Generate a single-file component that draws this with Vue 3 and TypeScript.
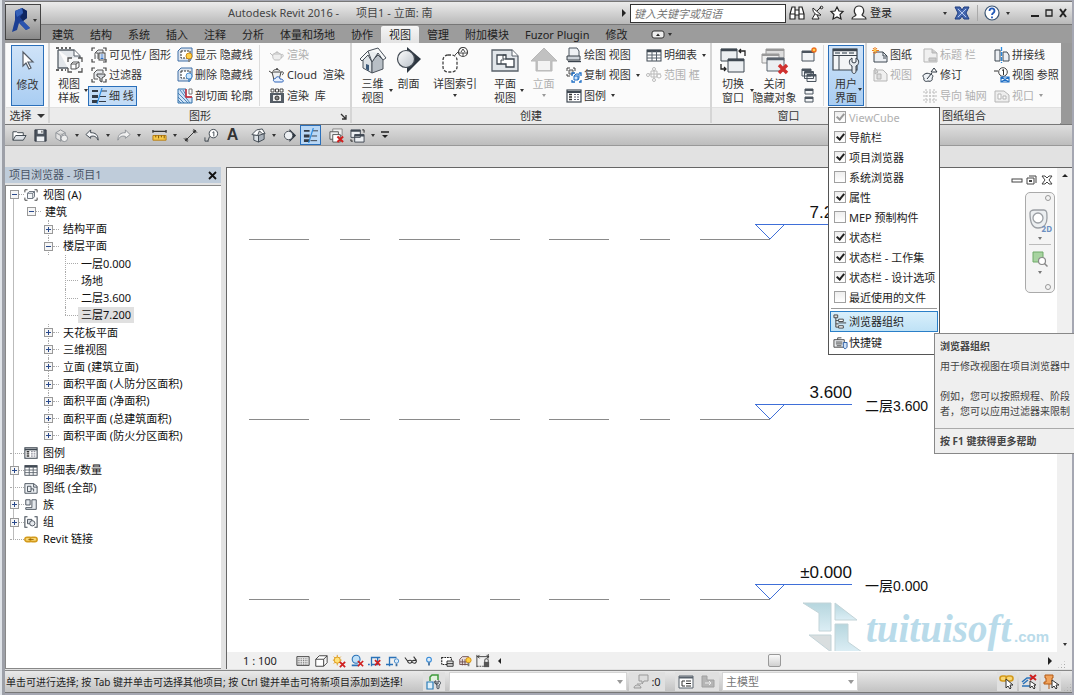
<script setup lang="ts">
import { ref } from 'vue'

interface Cmd { icon: string; label: string; off?: boolean; on?: boolean; drop?: boolean }
interface Tool { kind: 'btn' | 'drop' | 'sep'; icon?: string; label?: string; on?: boolean }
interface Node { depth: number; label: string; box?: '+' | '-'; icon?: string; selected?: boolean; end?: boolean }
interface Option { label: string; checked: boolean; off?: boolean }

const tabs = ['建筑', '结构', '系统', '插入', '注释', '分析', '体量和场地', '协作', '视图', '管理', '附加模块', 'Fuzor Plugin', '修改']
const activeTab = ref('视图')

const graphicsA: Cmd[] = [
  { icon: 'visibility', label: '可见性/ 图形' },
  { icon: 'filter', label: '过滤器' },
  { icon: 'thin', label: '细 线', on: true },
]
const graphicsB: Cmd[] = [
  { icon: 'showhidden', label: '显示 隐藏线' },
  { icon: 'removehidden', label: '删除 隐藏线' },
  { icon: 'cutprofile', label: '剖切面 轮廓' },
]
const graphicsC: Cmd[] = [
  { icon: 'teapot', label: '渲染', off: true },
  { icon: 'cloud', label: 'Cloud  渲染' },
  { icon: 'gallery', label: '渲染  库' },
]
const createA: Cmd[] = [
  { icon: 'drafting', label: '绘图 视图' },
  { icon: 'duplicate', label: '复制 视图', drop: true },
  { icon: 'legend', label: '图例', drop: true },
]
const createB: Cmd[] = [
  { icon: 'schedule', label: '明细表', drop: true },
  { icon: 'scope', label: '范围 框', off: true },
]
const windowsCol = [
  { icon: 'newwin', label: '复制窗口' },
  { icon: 'cascade', label: '层叠窗口' },
  { icon: 'tile', label: '平铺窗口' },
]
const sheetA: Cmd[] = [
  { icon: 'sheetnew', label: '图纸' },
  { icon: 'sheetview', label: '视图', off: true },
]
const sheetB: Cmd[] = [
  { icon: 'titleblock', label: '标题 栏', off: true },
  { icon: 'revision', label: '修订' },
  { icon: 'guidegrid', label: '导向 轴网', off: true },
]
const sheetC: Cmd[] = [
  { icon: 'matchline', label: '拼接线' },
  { icon: 'viewref', label: '视图 参照' },
  { icon: 'viewport', label: '视口', off: true, drop: true },
]

const tools: Tool[] = [
  { kind: 'btn', icon: 'open', label: '打开' },
  { kind: 'btn', icon: 'save', label: '保存' },
  { kind: 'btn', icon: 'sync', label: '同步' },
  { kind: 'drop' },
  { kind: 'btn', icon: 'undo', label: '放弃' },
  { kind: 'drop' },
  { kind: 'btn', icon: 'redo', label: '重做' },
  { kind: 'drop' },
  { kind: 'sep' },
  { kind: 'btn', icon: 'measure', label: '测量' },
  { kind: 'drop' },
  { kind: 'btn', icon: 'dimension', label: '对齐尺寸标注' },
  { kind: 'btn', icon: 'tag', label: '标记' },
  { kind: 'btn', icon: 'text', label: '文字' },
  { kind: 'sep' },
  { kind: 'btn', icon: 'house', label: '默认三维视图' },
  { kind: 'drop' },
  { kind: 'btn', icon: 'sectionmark', label: '剖面' },
  { kind: 'btn', icon: 'thin', label: '细线', on: true },
  { kind: 'sep' },
  { kind: 'btn', icon: 'closehidden', label: '关闭隐藏窗口' },
  { kind: 'btn', icon: 'switchsmall', label: '切换窗口' },
  { kind: 'drop' },
]

const nodes: Node[] = [
  { depth: 0, label: '视图 (A)', box: '-', icon: 'tviews' },
  { depth: 1, label: '建筑', box: '-' },
  { depth: 2, label: '结构平面', box: '+' },
  { depth: 2, label: '楼层平面', box: '-' },
  { depth: 3, label: '一层0.000' },
  { depth: 3, label: '场地' },
  { depth: 3, label: '二层3.600' },
  { depth: 3, label: '三层7.200', selected: true, end: true },
  { depth: 2, label: '天花板平面', box: '+' },
  { depth: 2, label: '三维视图', box: '+' },
  { depth: 2, label: '立面 (建筑立面)', box: '+' },
  { depth: 2, label: '面积平面 (人防分区面积)', box: '+' },
  { depth: 2, label: '面积平面 (净面积)', box: '+' },
  { depth: 2, label: '面积平面 (总建筑面积)', box: '+' },
  { depth: 2, label: '面积平面 (防火分区面积)', box: '+', end: true },
  { depth: 0, label: '图例', icon: 'legend' },
  { depth: 0, label: '明细表/数量', box: '+', icon: 'schedule' },
  { depth: 0, label: '图纸 (全部)', icon: 'tsheets' },
  { depth: 0, label: '族', box: '+', icon: 'tfamily' },
  { depth: 0, label: '组', box: '+', icon: 'tgroup' },
  { depth: 0, label: 'Revit 链接', icon: 'tlink' },
]

const options = ref<Option[]>([
  { label: 'ViewCube', checked: true, off: true },
  { label: '导航栏', checked: true },
  { label: '项目浏览器', checked: true },
  { label: '系统浏览器', checked: false },
  { label: '属性', checked: true },
  { label: 'MEP 预制构件', checked: false },
  { label: '状态栏', checked: true },
  { label: '状态栏 - 工作集', checked: true },
  { label: '状态栏 - 设计选项', checked: true },
  { label: '最近使用的文件', checked: false },
])

const viewTools = ['vdetail', 'vstyle', 'vsun', 'vshadow', 'vcrop', 'vcropshow', 'vglasses', 'vbulb', 'vtemp', 'vanalytic', 'vlock']

const dashes = [[249, 309], [340, 370], [399, 460], [490, 520], [549, 609], [640, 670], [700, 770]]
const levels = [
  { y: 225, value: '7.200', name: '' },
  { y: 405, value: '3.600', name: '二层3.600' },
  { y: 585, value: '±0.000', name: '一层0.000' },
]
</script>

<template>
  <svg width="0" height="0" class="defs" aria-hidden="true">
    <defs>
      <linearGradient id="steel" x1="0" y1="0" x2="1" y2="1"><stop offset="0" stop-color="#fff" /><stop offset="1" stop-color="#b9c0c8" /></linearGradient>
      <linearGradient id="wm" x1="0" y1="0" x2="0" y2="1"><stop offset="0" stop-color="#b6d6de" /><stop offset="1" stop-color="#dceef5" /></linearGradient>
    </defs>
    <symbol id="cursor" viewBox="0 0 16 24"><path d="M3 3v14l3-3 3 6 2-1-3-6h5z" fill="#fff" stroke="#555c66" stroke-width="1.2" /></symbol>
    <symbol id="template" viewBox="0 0 28 28">
      <path d="M3 3h16l6 6v10M3 3v18h10" fill="#e3e7eb" stroke="#555d66" stroke-width="1.3" /><path d="M19 3v6h6" fill="#fff" stroke="#555d66" />
      <path d="M1 1h3M6 1h2M10 1h2M14 1h2M1 23h3M6 23h2M10 23h1" stroke="#333" stroke-width="1.600" fill="none" />
      <rect x="13" y="11" width="14" height="14" fill="#f8f9fa" /><path d="M13 15v-4h4M23 11h4v4M27 21v4h-4M17 25h-4v-4" fill="none" stroke="#555" stroke-width="1.300" />
      <path d="M16 17h5v5h-5zM16 17l2-2h6l-3 2M21 22l3-2v-5" fill="#fff" stroke="#555" />
    </symbol>
    <symbol id="visibility" viewBox="0 0 16 16"><path d="M1 4V1h3M12 1h3v3M15 12v3h-3M4 15H1v-3" fill="none" stroke="#444" stroke-width="1.2" /><path d="M4 12V6l3-3h5v3" fill="#e6e9ed" stroke="#555" /><path d="M4 6h3v6" fill="#fff" stroke="#555" /><rect x="8" y="6" width="6" height="7" fill="#fff" stroke="#444" /><path d="M9.500 8h3M9.500 10h3M9.500 11.500h3" stroke="#2f6fc4" /></symbol>
    <symbol id="filter" viewBox="0 0 16 16"><path d="M1 4V1h3M12 1h3v3M15 12v3h-3M4 15H1v-3" fill="none" stroke="#444" stroke-width="1.200" /><path d="M3 12V6l3-3h6v3M3 12h4" fill="#e6e9ed" stroke="#555" /><path d="M6 7h8v2l-3 2v4l-2-1v-3L6 9z" fill="#d3d7dc" stroke="#444" /></symbol>
    <symbol id="thin" viewBox="0 0 16 16"><path d="M1 2h6v2H1zM1 7h6v3H1zM1 12h6v3H1z" fill="#333b46" /><path d="M10 3h6M9 8.500h6M8 13.500h7" stroke="#333b46" /><path d="M11 0L6 16" stroke="#2b8be0" stroke-width="1.200" /></symbol>
    <symbol id="showhidden" viewBox="0 0 16 16"><path d="M1 4l3-3h11v9l-2 4H1z" fill="#dce4ee" stroke="#3f6ea6" /><path d="M4 4h9v7H4z" fill="#fff" stroke="#333" stroke-dasharray="2 1" /><circle cx="12" cy="9" r="3" fill="#ffd24a" stroke="#d08a14" /><path d="M11 12h2v3h-2z" fill="#888" /></symbol>
    <symbol id="removehidden" viewBox="0 0 16 16"><path d="M1 4l3-3h11v9l-2 4H1z" fill="#dce4ee" stroke="#3f6ea6" /><path d="M4 4h9v7H4z" fill="#fff" stroke="#333" stroke-dasharray="2 1" /><circle cx="12" cy="9" r="3" fill="#cfe6fb" stroke="#4b8fd0" /><path d="M11 12h2v3h-2z" fill="#5a8ec0" /></symbol>
    <symbol id="cutprofile" viewBox="0 0 16 16"><path d="M1 1h8v8h6v6H1z" fill="#cfe3f7" stroke="#2f6ea9" /><path d="M1 5l10 10M1 9l6 6M1 12l3 3M3 2l10 13M6 2l3 5" stroke="#2f6ea9" stroke-width=".8" /><path d="M9 1v8h6" fill="none" stroke="#d7262b" stroke-width="1.400" /><path d="M12 1v5h3V1z" fill="#fff" stroke="#777" /></symbol>
    <symbol id="teapot" viewBox="0 0 16 16"><path d="M4 7h8c1 4-1 6-2 6H6c-1 0-3-2-2-6zM5 7c1-2 5-2 6 0M8 5V4M4 9L1 6M12 8c3-2 3 2 0 3" fill="#eee" stroke="#bcbcbc" /></symbol>
    <symbol id="cloud" viewBox="0 0 16 16"><path d="M4 4c1-2 6-2 7 0M3 5h9l-2 8H5zM3 6L0 4M12 5c3-1 3 2 1 3" fill="#eef0f2" stroke="#444" /><circle cx="8" cy="2" r="1" fill="#444" /><path d="M6 15c-3-1-1-4 0-3 1-3 5-3 5 0 4 0 4 3 2 3z" fill="#e8f1ff" stroke="#2d62b8" /></symbol>
    <symbol id="gallery" viewBox="0 0 16 16"><path d="M1 5h14v10H1z" fill="#555d66" /><path d="M2 1h3v3H2zM6.500 1h3v3h-3zM11 1h3v3h-3z" fill="#fff" stroke="#444" /><path d="M4 7h8v6H4z" fill="#eee" /><circle cx="8" cy="10" r="2" fill="#888" stroke="#333" /></symbol>
    <symbol id="bighouse" viewBox="0 0 28 28"><path d="M4 12v9l9 5V13L9 7z" fill="#dde2e6" stroke="#4a525b" /><path d="M13 14v12l11-4v-9l-5-5z" fill="#b8bfc6" stroke="#4a525b" /><path d="M1 12l8-8 10-3 8 10-3 2-5-7-6 9-4-7-6 6z" fill="#f6f8f9" stroke="#4a525b" /><path d="M9 4l4 11 6-9" fill="#e9edf0" stroke="#4a525b" /><path d="M7 17l3 1v6l-3-2z" fill="#3c5a7a" /></symbol>
    <symbol id="bigsection" viewBox="0 0 28 28"><path d="M12 0l14 12-14 14z" fill="#2d3640" /><circle cx="11" cy="12" r="8.500" fill="url(#steel)" stroke="#444c55" stroke-width="1.200" /></symbol>
    <symbol id="callout" viewBox="0 0 28 28"><rect x="2" y="8" width="14" height="17" rx="5" fill="#fff" stroke="#444" stroke-width="1.300" stroke-dasharray="3 1.500" /><path d="M14 8l3-3" stroke="#444" /><circle cx="22" cy="5" r="4.500" fill="#fff" stroke="#444" stroke-width="1.200" /><path d="M17 6h10M20 5l2-3 2 3M22 6v3" stroke="#444" fill="none" /></symbol>
    <symbol id="bigplan" viewBox="0 0 28 28"><path d="M1 3h20l6 6v15H1z" fill="#e2e6ea" stroke="#59616a" stroke-width="1.300" /><path d="M21 3v6h6" fill="#fff" stroke="#59616a" /><path d="M6 8h9v4h8v8h-8v-3H6z" fill="#fff" stroke="#3c444d" stroke-width="1.300" /><path d="M15 8h-3v4h3M10 17v-4h3" fill="none" stroke="#3c444d" /></symbol>
    <symbol id="elevation" viewBox="0 0 28 28"><path d="M14 1L1 14h5v10h16V14h5z" fill="#c1c1c1" stroke="#b8b8b8" /><path d="M8 14h12v9H8z" fill="#f3f3f3" /></symbol>
    <symbol id="drafting" viewBox="0 0 16 16"><path d="M3 1h8l2 3v6H3z" fill="#eef1f4" stroke="#4b545e" /><path d="M1 9h13v4H1z" fill="#cdd3d9" stroke="#3a424b" /><path d="M2 14.500h13" stroke="#3a424b" stroke-width="1.400" /></symbol>
    <symbol id="duplicate" viewBox="0 0 16 16"><path d="M1 4V1h3M7 1h2v3M1 7v2h3" fill="none" stroke="#444" /><path d="M3 3h4v4H3z" fill="#ddd" stroke="#555" /><path d="M6 9V6h3M13 6h2v3M15 13v2h-2M9 15H6v-2" fill="none" stroke="#1f6fc5" stroke-width="1.300" /><path d="M8 9h4v4H8zM8 9l2-2h3v4l-1 2" fill="#cfe4fa" stroke="#1f6fc5" /></symbol>
    <symbol id="legend" viewBox="0 0 16 16"><rect x="1" y="2" width="14" height="12" fill="#fff" stroke="#3f4852" stroke-width="1.200" /><path d="M1 4h14" stroke="#3f4852" stroke-width="2" /><path d="M3 6.500h3M3 9h3M3 11.500h3" stroke="#333" stroke-width="1.600" /><path d="M8 6.500h5M8 9h5M8 11.500h5" stroke="#667" stroke-dasharray="2 1" /></symbol>
    <symbol id="schedule" viewBox="0 0 16 16"><rect x="1" y="3" width="14" height="11" fill="#fff" stroke="#3f4852" /><path d="M1 4h14" stroke="#3f4852" stroke-width="2.500" /><path d="M1 8h14M1 11h14M6 4v10M10.500 4v10" stroke="#59626c" /></symbol>
    <symbol id="scope" viewBox="0 0 16 16"><path d="M2 7h13M8 2v12M5 4h6v6H5z" stroke="#bbb" fill="none" /><circle cx="2" cy="8" r="1.500" fill="#fff" stroke="#bbb" /><circle cx="8" cy="2" r="1.500" fill="#fff" stroke="#bbb" /><circle cx="13" cy="9" r="2" fill="#fff" stroke="#bbb" /><circle cx="8" cy="13" r="1.500" fill="#fff" stroke="#bbb" /></symbol>
    <symbol id="switchwin" viewBox="0 0 28 28"><path d="M2 2h16v12H2z" fill="#eceff2" stroke="#3f4852" /><path d="M2 3h16" stroke="#3f4852" stroke-width="2.500" /><path d="M9 12h16v13H9z" fill="#eceff2" stroke="#3f4852" /><path d="M9 13h16" stroke="#3f4852" stroke-width="2.500" /><path d="M20 4h6v5M22 2l-2 2 2 2M2 17v5h5M5 20l2 2-2 2" fill="none" stroke="#222" stroke-width="1.300" /></symbol>
    <symbol id="bigclosehidden" viewBox="0 0 28 28"><path d="M5 2h18v12H5z" fill="#ddd" stroke="#999" /><path d="M5 3h18" stroke="#999" stroke-width="2" /><path d="M1 7h17v9H1z" fill="#eee" stroke="#999" /><path d="M1 8h17" stroke="#999" stroke-width="2" /><path d="M6 11h17v13H6z" fill="#eceff2" stroke="#59626c" /><path d="M6 12h17" stroke="#59626c" stroke-width="2.500" /><path d="M18 18l8 8M26 18l-8 8" stroke="#d0312f" stroke-width="3.400" /></symbol>
    <symbol id="newwin" viewBox="0 0 16 16"><path d="M1 4h12v10H1z" fill="#f2f4f6" stroke="#4b545e" /><path d="M1 5h12" stroke="#4b545e" stroke-width="2" /><circle cx="13" cy="3" r="2" fill="#ffd24a" stroke="#ed6c1d" stroke-width="1.400" /></symbol>
    <symbol id="cascade" viewBox="0 0 16 16"><g fill="#f2f4f6" stroke="#4b545e"><path d="M1 2h9v7H1zM3.500 4.500h9v7h-9zM6 7.500h9v7H6z" /></g><path d="M1 3h9M4 5.500h8M6 8.500h9" stroke="#4b545e" stroke-width="1.800" /></symbol>
    <symbol id="tile" viewBox="0 0 16 16"><path d="M4 1h8v5H4zM4 9h8v5H4z" fill="#f2f4f6" stroke="#4b545e" /><path d="M4 2h8M4 10h8" stroke="#4b545e" stroke-width="2" /></symbol>
    <symbol id="userui" viewBox="0 0 28 28"><path d="M1 2h24v21H1z" fill="#f3f5f7" stroke="#3b444e" stroke-width="1.200" /><path d="M1 3h24" stroke="#3b444e" stroke-width="2.500" /><path d="M1 8.500h24M7 8v15" stroke="#3b444e" /><path d="M3 6h5M10 6h5M17 6h5" stroke="#6a747f" stroke-width="1.500" /><path d="M20 11v4l2 1 2-1v-4c4 2 3 7 0 8v6c-1 2-3 2-4 0v-6c-3-1-4-6 0-8z" fill="#e3e7ec" stroke="#333d48" /></symbol>
    <symbol id="sheetnew" viewBox="0 0 16 16"><path d="M2 5h9l4 4v6H2z" fill="#eceff3" stroke="#3f4852" /><path d="M11 5v4h4M11 11h3" stroke="#3f4852" fill="none" /><path d="M3 0v7M0 3.500h7M1 1l4 5M5 1L1 6" stroke="#ed7a1d" /><circle cx="3" cy="3.500" r="1.300" fill="#ffd24a" /></symbol>
    <symbol id="sheetview" viewBox="0 0 16 16"><path d="M2 3h9l4 4v7H2z" fill="#f0f0f0" stroke="#b5b5b5" /><path d="M5 7h4v5H5zM3 1v6l3-2z" fill="#ddd" stroke="#b5b5b5" /></symbol>
    <symbol id="titleblock" viewBox="0 0 16 16"><path d="M2 2h8l5 4v9H2z" fill="#f0f0f0" stroke="#b5b5b5" /><path d="M7 11h7v3H7zM10 2v4h5" fill="#ccc" stroke="#b5b5b5" /></symbol>
    <symbol id="revision" viewBox="0 0 16 16"><path d="M3 7c-3 1-2 3-1 4-1 3 2 4 4 3 3 1 5-1 4-3 2-2 0-4-2-4-2-1-4-1-5 0z" fill="#eef2f6" stroke="#2d3640" /><path d="M5 12l5-6" stroke="#2d3640" /><path d="M9 5l3-4 3 4z" fill="#fff" stroke="#2d3640" /></symbol>
    <symbol id="guidegrid" viewBox="0 0 16 16"><path d="M4 1v14M8 1v14M12 1v14M1 4h14M1 8h14M1 12h14" stroke="#bbb" stroke-dasharray="2 1" /></symbol>
    <symbol id="matchline" viewBox="0 0 16 16"><path d="M1 3h5v11H1zM9 5h4l2 3v6H9z" fill="#eceff3" stroke="#3f4852" /><path d="M7.500 0v16" stroke="#2b8be0" stroke-width="1.300" stroke-dasharray="4 1" /></symbol>
    <symbol id="viewref" viewBox="0 0 16 16"><circle cx="9" cy="5" r="4.300" fill="#fff" stroke="#444" /><path d="M0 4h4M8 3.500L9.500 2.500V8" fill="none" stroke="#333" /><path d="M7 10h8v5H7zM7 10l8 5M15 10l-8 5" fill="none" stroke="#1f6fc5" stroke-width="1.200" /></symbol>
    <symbol id="viewport" viewBox="0 0 16 16"><path d="M1 3h9l5 4v7H1z" fill="#eee" stroke="#b5b5b5" /><path d="M4 6h3v5H4zM9 8h3v3H9z" fill="#fff" stroke="#b5b5b5" /></symbol>

    <symbol id="open" viewBox="0 0 16 16"><path d="M1 13V4h4l1 1h6v3" fill="#fff" stroke="#3c444d" /><path d="M1 13l3-5h11l-3 5z" fill="#dfe3e8" stroke="#3c444d" /></symbol>
    <symbol id="save" viewBox="0 0 16 16"><path d="M2 2h12v12H2z" fill="#4a525c" stroke="#333b45" /><path d="M5 2h6v4H5zM4 9h8v5H4z" fill="#eef1f4" /><path d="M9 3h1v2H9z" fill="#333" /></symbol>
    <symbol id="sync" viewBox="0 0 16 16"><path d="M2 5l5-3 5 3v6l-5 3-5-3zM2 5l5 3 5-3M7 8v6" fill="#e3e3e3" stroke="#8d9196" /><circle cx="11" cy="11" r="3.500" fill="#eee" stroke="#8d9196" /></symbol>
    <symbol id="undo" viewBox="0 0 16 16"><path d="M6 2L1 7l5 4V9c4-1 6 0 8 4 0-6-3-8-8-8z" fill="#f5f6f8" stroke="#3c444d" /></symbol>
    <symbol id="redo" viewBox="0 0 16 16"><path d="M10 2l5 5-5 4V9C6 8 4 9 2 13c0-6 3-8 8-8z" fill="#f0f0f0" stroke="#8d9196" /></symbol>
    <symbol id="measure" viewBox="0 0 16 16"><path d="M1 3.500h14M1 2v3M15 2v3" stroke="#333" stroke-width="1.400" /><path d="M1 8h14v5H1z" fill="#f7c84a" stroke="#b77d10" /><path d="M4 8v2M7 8v3M10 8v2M13 8v3" stroke="#7a5200" /></symbol>
    <symbol id="dimension" viewBox="0 0 16 16"><path d="M3 13L13 3M1 11l4 4M11 1l4 4" stroke="#333" fill="none" /><path d="M2 14l1-4 3 3zM14 2l-1 4-3-3z" fill="#333" /></symbol>
    <symbol id="tag" viewBox="0 0 16 16"><circle cx="10" cy="6" r="4.500" fill="#fff" stroke="#3c444d" /><path d="M9 5l1.500-1v5M6 9l-2 5M1 14h4M1 10v4" fill="none" stroke="#3c444d" /></symbol>
    <symbol id="house" viewBox="0 0 16 16"><path d="M3 7v6l5 2V8z" fill="#dde2e6" stroke="#3f4750" /><path d="M8 8v7l6-3V6z" fill="#a9b1ba" stroke="#3f4750" /><path d="M1 7l5-5 6-1 3 5-3 0-3-3-2 5z" fill="#fff" stroke="#3f4750" /></symbol>
    <symbol id="sectionmark" viewBox="0 0 16 16"><path d="M8 1l7 7-7 7z" fill="#2d3640" /><circle cx="7" cy="8" r="4.500" fill="#eceff2" stroke="#444c55" /></symbol>
    <symbol id="closehidden" viewBox="0 0 16 16"><path d="M4 1h10v7H4z" fill="#eee" stroke="#888" /><path d="M1 4h9v8H1z" fill="#eee" stroke="#555" /><path d="M4 7h8v8H4z" fill="#fff" stroke="#555" /><path d="M9 9l6 6M15 9l-6 6" stroke="#d0201f" stroke-width="2.200" /></symbol>
    <symbol id="switchsmall" viewBox="0 0 16 16"><path d="M1 2h10v8H1zM5 7h10v8H5z" fill="#eceff2" stroke="#3f4852" /><path d="M1 3h10M5 8h10" stroke="#3f4852" stroke-width="2" /><path d="M13 2h2v3M1 12v2h2" stroke="#222" fill="none" /></symbol>

    <symbol id="tviews" viewBox="0 0 16 16"><path d="M1 5V2h3M12 2h3v3M15 11v3h-3M4 14H1v-3" fill="none" stroke="#333" /><path d="M4 6h6v6H4zM4 6l2-2h6l-2 2M10 12l2-2V4" fill="#f4f6f8" stroke="#5b6570" /></symbol>
    <symbol id="tsheets" viewBox="0 0 16 16"><path d="M1 3h10l4 3v8H1z" fill="#eef1f4" stroke="#3f4852" /><path d="M11 3v4h4M4 6h4v6H4zM8 9h3v3" fill="none" stroke="#3f4852" /></symbol>
    <symbol id="tfamily" viewBox="0 0 16 16"><path d="M2 2h5v6H2zM9 2h5v11H2v-2h7z" fill="#e5e9ed" stroke="#3f4852" /></symbol>
    <symbol id="tgroup" viewBox="0 0 16 16"><path d="M4 2H1v12h3M12 2h3v12h-3" fill="none" stroke="#3f4852" stroke-width="1.200" /><path d="M4 5h5v5H4z" fill="#d8dde3" stroke="#3f4852" /><circle cx="9.500" cy="9.500" r="3" fill="#e8ebef" stroke="#3f4852" /></symbol>
    <symbol id="tlink" viewBox="0 0 16 16"><rect x="1" y="6" width="8" height="5" rx="2.500" fill="#f9d774" stroke="#d39a1c" stroke-width="1.800" /><rect x="7" y="6" width="8" height="5" rx="2.500" fill="#f9d774" stroke="#d39a1c" stroke-width="1.800" /><path d="M5 8.500h6" stroke="#8d5f05" /></symbol>

    <symbol id="vdetail" viewBox="0 0 16 16"><path d="M1 3h14v10H1z" fill="#eee" stroke="#333" /><path d="M2 5.500h12M2 7.500h12M2 9.500h12M2 11.500h12" stroke="#555" stroke-dasharray="1 1" /></symbol>
    <symbol id="vstyle" viewBox="0 0 16 16"><path d="M2 6h9v8H2zM2 6l4-4h9l-4 4M11 14l4-4V2" fill="#fff" stroke="#333" /></symbol>
    <symbol id="vsun" viewBox="0 0 16 16"><path d="M6 1v12M1 7h10M2 3l8 8M10 3l-8 8" stroke="#dc9410" /><circle cx="6" cy="7" r="3.500" fill="#ffe27a" stroke="#dc9410" /><path d="M9 9l6 6M15 9l-6 6" stroke="#cf2020" stroke-width="2" /></symbol>
    <symbol id="vshadow" viewBox="0 0 16 16"><circle cx="7" cy="6" r="4.500" fill="#bfe0f8" stroke="#2a72b8" stroke-width="1.200" /><path d="M2 13h8" stroke="#2a72b8" stroke-width="2" /><path d="M9 8l6 6M15 8l-6 6" stroke="#cf2020" stroke-width="2" /></symbol>
    <symbol id="vcrop" viewBox="0 0 16 16"><path d="M4 14V4h10M0 12h2M4 12h7V4" stroke="#2a72b8" stroke-width="1.500" fill="none" /><path d="M8 7l6 6M14 7l-6 6" stroke="#cf2020" stroke-width="2" /></symbol>
    <symbol id="vcropshow" viewBox="0 0 16 16"><path d="M4 14V4h8M0 12h8" stroke="#2a72b8" stroke-width="1.500" fill="none" /><circle cx="12" cy="8" r="2.500" fill="#dcedfb" stroke="#3c84c8" /><path d="M11 11h2v3h-2z" fill="#3c6c9c" /></symbol>
    <symbol id="vglasses" viewBox="0 0 16 16"><path d="M1 4l3 4c1 4 5 3 5 0 2-1 4-1 5-1 1 3-2 5-5 2M4 8c2-1 4-1 5 0M14 7l-3-4" fill="none" stroke="#333" stroke-width="1.200" /></symbol>
    <symbol id="vbulb" viewBox="0 0 16 16"><circle cx="8" cy="6.500" r="2.700" fill="#dcedfb" stroke="#2f86d6" stroke-width="1.200" /><path d="M7 9.500h2V13H7z" fill="#3c6c9c" /></symbol>
    <symbol id="vtemp" viewBox="0 0 16 16"><path d="M2 4h11v8H2z" fill="#fff" stroke="#222" stroke-width="1.300" stroke-dasharray="2 1" /><path d="M8 8h7v6H8z" fill="#ddd" stroke="#222" /><path d="M8 11h7" stroke="#222" /></symbol>
    <symbol id="vanalytic" viewBox="0 0 16 16"><path d="M2 6l3-3h7v9H2zM5 6v7M8 6v7M2 9h10" fill="#e8dede" stroke="#6a4a4a" /><circle cx="12" cy="7" r="3" fill="#ffcf40" stroke="#cf8a12" /><path d="M11 10h2v4h-2z" fill="#777" /></symbol>
    <symbol id="vlock" viewBox="0 0 16 16"><path d="M1 15V1M1 3h14M14 0v5M4 1L2 3l2 2M12 1l2 2-2 2" stroke="#333" fill="none" /><path d="M1 14h8" stroke="#333" stroke-dasharray="2 1" /><path d="M9 9h6v6H9z" fill="#555" /><path d="M10 9V7c0-2 4-2 4 0v2" fill="none" stroke="#555" stroke-width="1.200" /></symbol>
    <symbol id="worksets" viewBox="0 0 16 16"><path d="M1 8h6v7H1z" fill="#dff0fb" stroke="#2a7db8" stroke-width="1.200" /><path d="M4 7V3l2-2h6v5" fill="#e3f3df" stroke="#3e9a3b" stroke-width="1.500" /><path d="M9 7h1v3h2V7h1c2 1 2 3 0 4v3c0 1-2 1-2 0v-3c-2-1-3-3-2-4z" fill="#e3e7ec" stroke="#3b444e" /></symbol>
    <symbol id="request" viewBox="0 0 16 16"><path d="M6 1h9v6h-4l-2 3V7H6z" fill="#ddd" stroke="#999" /><path d="M1 14c0-4 7-4 7 0zM4 10h4" fill="#d5d5d5" stroke="#999" /></symbol>
    <symbol id="listopts" viewBox="0 0 16 16"><path d="M1 2h14v12H1z" fill="#fff" stroke="#59626c" /><path d="M1 3.500h14" stroke="#59626c" stroke-width="2" /><path d="M4 7h3M8 7h5M4 7v5h3M8 9.500h5M8 12h5" stroke="#333" fill="none" /></symbol>
    <symbol id="exclude" viewBox="0 0 16 16"><path d="M2 2h5v4h7v7H2z" fill="#b5b5b5" stroke="#a0a0a0" /><path d="M5 9h6M9 7l2 2-2 2" stroke="#eee" fill="none" /></symbol>
    <symbol id="sellink" viewBox="0 0 16 16"><rect x="1" y="2" width="7" height="5" rx="2.500" fill="#f9d774" stroke="#d39a1c" stroke-width="1.600" /><rect x="7" y="2" width="7" height="5" rx="2.500" fill="#f9d774" stroke="#d39a1c" stroke-width="1.600" /><path d="M7 5v9l2-2 2 3 1-1-1-3h3z" fill="#fff" stroke="#333" /></symbol>
    <symbol id="selunder" viewBox="0 0 16 16"><path d="M1 8l5-4h5M1 12h10M2 10l5-4" stroke="#2a72b8" stroke-width="1.500" fill="none" /><path d="M9 1l6 5M15 1L9 6" stroke="#cf2020" stroke-width="2" /><path d="M9 7v7l2-2 2 3 1-1-1-3h2z" fill="#fff" stroke="#333" /></symbol>
    <symbol id="selpin" viewBox="0 0 16 16"><path d="M2 1h8v3H9v4h2v2H1V8h2V4H2z" fill="#f0a35c" stroke="#b55a14" /><path d="M6 10v5" stroke="#b55a14" /><path d="M9 6v8l2-2 2 3 1-1-1-3h3z" fill="#fff" stroke="#333" /></symbol>

    <symbol id="binoculars" viewBox="0 0 16 16"><path d="M3 2h3v3h4V2h3l2 7v5h-5v-4H6v4H1V9zM6 5v5M10 5v5M1 9h5M10 9h5" fill="#fff" stroke="#222" stroke-width="1.200" /></symbol>
    <symbol id="dish" viewBox="0 0 16 16"><path d="M4 3c-1 5 4 8 8 7zM8 6l4-4M6 9l-3 5h7l-2-4" fill="#fff" stroke="#222" /><circle cx="12.500" cy="2.500" r="1.300" fill="none" stroke="#222" /></symbol>
    <symbol id="star" viewBox="0 0 16 16"><path d="M8 2l2 4 4 .5-3 3 1 4.500L8 12l-4 2 1-4.500-3-3L6 6z" fill="#fff" stroke="#222" stroke-width="1.200" /></symbol>
    <symbol id="person" viewBox="0 0 16 16"><path d="M1 14c0-3 3-2 4-4-3-3-2-9 3-9s6 6 3 9c1 2 4 1 4 4z" fill="#fff" stroke="#333" stroke-width="1.200" /></symbol>
    <symbol id="exchange" viewBox="0 0 16 16"><path d="M1 2h5l2 3 2-3h5l-3 6 3 6h-5l-2-3-2 3H1l3-6z" fill="#4568b0" stroke="#1d3c80" /><path d="M4 4l8 8M12 4l-8 8" stroke="#b6c9ee" /></symbol>
    <symbol id="help" viewBox="0 0 16 16"><circle cx="8" cy="8" r="7" fill="#fff" stroke="#3b5572" stroke-width="1.200" /><path d="M5.500 6c0-3.500 5-3.500 5 0 0 2-2.500 2-2.500 4M8 11.500v1.700" fill="none" stroke="#2259b8" stroke-width="1.800" /></symbol>
    <symbol id="orgtree" viewBox="0 0 16 16"><path d="M1 1h4v3H1zM3 4v10h3M3 7h3M3 10.500h3" fill="#ddd" stroke="#444" /><path d="M6 5.500h5v2.500H6zM6 9.500h8M6 12.500h5V15H6z" fill="#fff" stroke="#444" /></symbol>
    <symbol id="keyboard" viewBox="0 0 16 16"><path d="M1 5h11v8H1z" fill="#eef1f4" stroke="#444" /><path d="M3 7.500h7M3 9.500h7M4 11.500h5M5 5V3h4" stroke="#444" fill="none" /><path d="M11 8h4v5l-2 2-2-2z" fill="#cfe0f4" stroke="#2d5fa5" /></symbol>
    <symbol id="wheel" viewBox="0 0 24 24"><path d="M2 4c0-2 2-3 4-3h10c3 0 3 3 3 8 0 6-3 10-9 10S2 14 2 4z" fill="#eceff1" stroke="#9b9fa4" stroke-width="1.300" /><circle cx="10" cy="9" r="5" fill="#fff" stroke="#9b9fa4" stroke-width="1.300" /></symbol>
    <symbol id="zoomregion" viewBox="0 0 16 16"><path d="M1 1h10v10H1z" fill="#a7d3a0" stroke="#6faa69" /><circle cx="10" cy="10" r="3.500" fill="#fff" stroke="#888" stroke-width="1.200" /><path d="M12.500 12.500l3 3" stroke="#888" stroke-width="1.500" /></symbol>
  </svg>

  <div class="frame">
    <div class="window">
      <header class="titlebar">
        <h1 class="doc"><span>Autodesk Revit 2016 -</span><span>项目1 - 立面: 南</span></h1>
        <div class="right">
          <i class="tri east"></i>
          <input class="search" type="text" placeholder="键入关键字或短语" aria-label="搜索" />
          <button v-for="i in ['binoculars', 'dish', 'star']" :key="i" class="tb" :aria-label="i"><svg class="i16"><use :href="'#' + i" /></svg></button>
          <button class="login"><svg class="i16"><use href="#person" /></svg>登录</button>
          <i class="tri"></i>
          <button class="tb ex" aria-label="Exchange"><svg class="i16"><use href="#exchange" /></svg></button>
          <button class="tb hp" aria-label="帮助"><svg class="i16"><use href="#help" /></svg></button>
          <i class="tri"></i>
          <div class="caption">
            <button aria-label="最小化"><svg class="i10"><path d="M1 8h8" stroke="#222" stroke-width="2" /></svg></button>
            <button aria-label="还原"><svg class="i10"><path d="M2 2h6v6H2z" fill="none" stroke="#222" stroke-width="1.300" /></svg></button>
            <button aria-label="关闭"><svg class="i10"><path d="M2 1l6 8M8 1L2 9" stroke="#222" stroke-width="2" /></svg></button>
          </div>
        </div>
      </header>
      <button class="appbtn" aria-label="应用程序菜单">
        <svg width="21" height="26" viewBox="0 0 21 26"><path d="M5 4l7-3 5 3v7l-4 3 7 7-4 2-7-7-2 7-5 2 3-12z" fill="#1c3f94" /><path d="M12 1l5 3v7l-4 3-3-4 3-4z" fill="#0e2560" /><path d="M5 4l7-3 1 5-6 4z" fill="#3561b8" /><path d="M9 15l4-1 7 7-4 2z" fill="#2b55b0" /></svg>
        <i class="tri"></i>
      </button>

      <nav class="tabs">
        <button v-for="t in tabs" :key="t" :class="{ active: t === activeTab }" @click="activeTab = t">{{ t }}</button>
        <button class="mini" aria-label="最小化功能区"><svg width="14" height="9"><rect x="1" y="1" width="12" height="7" rx="2" fill="#eee" stroke="#333" /><path d="M5 6l2-2.500L9 6z" fill="#222" /></svg><i class="tri"></i></button>
      </nav>

      <section class="ribbon">
        <div class="panel select">
          <div class="body"><button class="big modify"><svg class="i28"><use href="#cursor" /></svg><span>修改</span></button></div>
          <footer>选择<i class="tri wide"></i></footer>
        </div>
        <div class="panel graphics">
          <div class="body">
            <button class="big"><svg class="i28"><use href="#template" /></svg><span>视图<br />样板</span><i class="tri side"></i></button>
            <div v-for="(col, n) in [graphicsA, graphicsB, graphicsC]" :key="n" class="col" :class="{ ruled: n === 1, inset: n === 2 }">
              <button v-for="c in col" :key="c.label" class="cmd" :class="{ on: c.on }" :disabled="c.off"><svg class="i16"><use :href="'#' + c.icon" /></svg>{{ c.label }}</button>
            </div>
          </div>
          <footer>图形<svg class="launcher" width="8" height="8"><path d="M1 1l5 5M6 2v4H2" fill="none" stroke="#333" stroke-width="1.300" /></svg></footer>
        </div>
        <div class="panel create">
          <div class="body">
            <button class="big"><svg class="i28"><use href="#bighouse" /></svg><span>三维<br />视图</span><i class="tri side"></i></button>
            <button class="big"><svg class="i28"><use href="#bigsection" /></svg><span>剖面</span></button>
            <button class="big"><svg class="i28"><use href="#callout" /></svg><span>详图索引</span><i class="tri under"></i></button>
            <button class="big"><svg class="i28"><use href="#bigplan" /></svg><span>平面<br />视图</span><i class="tri side"></i></button>
            <button class="big" disabled><svg class="i28"><use href="#elevation" /></svg><span>立面</span><i class="tri under"></i></button>
            <div v-for="(col, n) in [createA, createB]" :key="n" class="col">
              <button v-for="c in col" :key="c.label" class="cmd" :disabled="c.off"><svg class="i16"><use :href="'#' + c.icon" /></svg>{{ c.label }}<i v-if="c.drop" class="tri"></i></button>
            </div>
          </div>
          <footer>创建</footer>
        </div>
        <div class="panel windows">
          <div class="body">
            <button class="big"><svg class="i28"><use href="#switchwin" /></svg><span>切换<br />窗口</span><i class="tri side"></i></button>
            <button class="big"><svg class="i28"><use href="#bigclosehidden" /></svg><span>关闭<br />隐藏对象</span></button>
            <div class="col ruled mid">
              <button v-for="c in windowsCol" :key="c.icon" class="cmd" :aria-label="c.label"><svg class="i16"><use :href="'#' + c.icon" /></svg></button>
            </div>
            <div class="holder">
              <button class="big pressed"><svg class="i28"><use href="#userui" /></svg><span>用户<br />界面</span><i class="tri side"></i></button>
              <div class="menu">
                <label v-for="o in options" :key="o.label" :class="{ off: o.off }"><input v-model="o.checked" type="checkbox" :disabled="o.off" />{{ o.label }}</label>
                <hr />
                <button class="hot"><svg class="i16"><use href="#orgtree" /></svg>浏览器组织</button>
                <button><svg class="i16"><use href="#keyboard" /></svg>快捷键</button>
                <div class="tip">
                  <h2>浏览器组织</h2>
                  <p>用于修改视图在项目浏览器中</p>
                  <p class="gap">例如，您可以按照规程、阶段<br />者，您可以应用过滤器来限制</p>
                  <h2 class="f1">按 F1 键获得更多帮助</h2>
                </div>
              </div>
            </div>
          </div>
          <footer>窗口</footer>
        </div>
        <div class="panel sheets">
          <div class="body">
            <div v-for="(col, n) in [sheetA, sheetB, sheetC]" :key="n" class="col">
              <button v-for="c in col" :key="c.label" class="cmd" :disabled="c.off"><svg class="i16"><use :href="'#' + c.icon" /></svg>{{ c.label }}<i v-if="c.drop" class="tri"></i></button>
            </div>
          </div>
          <footer>图纸组合</footer>
        </div>
      </section>

      <div class="qat">
        <template v-for="(t, n) in tools" :key="n">
          <button v-if="t.kind === 'btn'" :class="{ on: t.on }" :aria-label="t.label"><b v-if="t.icon === 'text'">A</b><svg v-else class="i16"><use :href="'#' + t.icon" /></svg></button>
          <span v-else-if="t.kind === 'drop'" class="drop"><i class="tri"></i></span>
          <span v-else class="sep"></span>
        </template>
        <button class="more" aria-label="自定义"><svg width="8" height="8"><path d="M0 1h8" stroke="#222" stroke-width="1.500" /><path d="M1 4h6L4 7z" fill="#222" /></svg></button>
      </div>
      <div class="optbar"></div>

      <main class="work">
        <aside class="browser">
          <header><span>项目浏览器 - 项目1</span><button aria-label="关闭"><svg width="9" height="9"><path d="M1 1l7 7M8 1L1 8" stroke="#111" stroke-width="1.800" /></svg></button></header>
          <div class="treebox">
            <ul>
              <li v-for="(n, i) in nodes" :key="i" :class="'d' + n.depth">
                <span class="elbow" :class="{ end: n.end }"><span v-if="n.box" class="box" :class="{ plus: n.box === '+' }"></span></span>
                <svg v-if="n.icon" class="i14"><use :href="'#' + n.icon" /></svg>
                <span class="name" :class="{ sel: n.selected }">{{ n.label }}</span>
              </li>
            </ul>
          </div>
        </aside>

        <section class="view">
          <div class="canvas">
            <svg class="drawing" width="829" height="483" viewBox="227 169 829 483">
              <g v-for="l in levels" :key="l.y">
                <path v-for="d in dashes" :key="d[0]" :d="`M${d[0]} ${l.y + 15}.5H${d[1]}`" stroke="#8a8a8a" />
                <path :d="`M755 ${l.y}.5H852M755 ${l.y}l15 15 15 -15`" fill="none" stroke="#3f6fd8" />
                <text x="852" :y="l.y - 6" text-anchor="end" class="lv">{{ l.value }}</text>
                <text v-if="l.name" x="865" :y="l.y + 7" class="ln">{{ l.name }}</text>
              </g>
              <g stroke="#c3d4d8" stroke-width="1" fill="url(#wm)">
                <path d="M803 604h28v28h-12v-18z" /><path d="M835 604l22 17h-22z" /><path d="M835 625h13v18l14 10h-27z" /><path d="M809 636h22v17z" fill="#d9dedf" />
              </g>
              <text x="866" y="643" class="wm">tuituisoft</text><text x="1014" y="643" class="wmc">.com</text>
            </svg>
            <div class="docbtns">
              <svg width="12" height="10"><rect x="1" y="4" width="10" height="3" fill="#fff" stroke="#444" /></svg>
              <svg width="12" height="10"><path d="M3 1h7v7M1 3h7v6H1z" fill="none" stroke="#444" /><path d="M3 5h3v2H3z" fill="#444" /></svg>
              <svg width="12" height="10"><path d="M1 1h3l2 2 2-2h3L8 5l3 4H8L6 7 4 9H1l3-4z" fill="#fff" stroke="#444" /></svg>
            </div>
            <div class="navbar">
              <i class="dot"></i>
              <button class="wheelbtn" aria-label="导航控制盘"><svg width="24" height="24"><use href="#wheel" /></svg><b>2D</b></button>
              <i class="tri"></i><hr />
              <button aria-label="区域放大"><svg class="i16"><use href="#zoomregion" /></svg></button>
              <i class="tri"></i>
              <i class="dot low"></i>
            </div>
          </div>
          <div class="vscroll"><i class="tri north"></i><i class="tri"></i></div>
          <div class="viewbar">
            <span class="scale">1 : 100</span>
            <button v-for="v in viewTools" :key="v" :aria-label="v"><svg class="i14"><use :href="'#' + v" /></svg></button>
            <i class="tri west"></i>
            <div class="track"><span class="thumb"></span></div>
            <i class="tri east"></i>
          </div>
          <div class="grip"></div>
        </section>
      </main>

      <footer class="status">
        <p>单击可进行选择; 按 Tab 键并单击可选择其他项目; 按 Ctrl 键并单击可将新项目添加到选择!</p>
        <button class="cell" aria-label="工作集"><svg class="i16"><use href="#worksets" /></svg></button>
        <div class="combo ws"><select aria-label="活动工作集"><option></option></select><i class="tri"></i></div>
        <button class="cell req"><svg class="i16"><use href="#request" /></svg>:0</button>
        <button class="cell" aria-label="设计选项"><svg class="i16"><use href="#listopts" /></svg></button>
        <button class="cell" aria-label="排除选项"><svg class="i16"><use href="#exclude" /></svg></button>
        <div class="combo"><select aria-label="活动设计选项"><option>主模型</option></select><i class="tri"></i></div>
        <span class="fill"></span>
        <button v-for="s in ['sellink', 'selunder', 'selpin']" :key="s" class="cell pick" :aria-label="s"><svg class="i16"><use :href="'#' + s" /></svg></button>
        <span class="grip"></span>
      </footer>
    </div>
  </div>
</template>

<style>
html, body { margin: 0; overflow: hidden; background: #9b9da8; }
</style>

<style scoped>
.frame {
  box-sizing: border-box; height: 100vh; min-height: 600px; padding: 1px 2px 2px 5px; overflow: hidden;
  background: linear-gradient(90deg, #dfe3e8 0, #dfe3e8 2px, #9da0a8 2px, #9da0a8 5px, #a5a7b2 5px);
  font: 11px/14px "Noto Sans", "Noto Sans CJK SC", sans-serif; color: #333;
}
.defs { position: absolute; }
button { font: inherit; color: inherit; background: none; border: 0; padding: 0; margin: 0; }
button svg { display: block; flex: none; }
.i16 { width: 16px; height: 16px; }
.i14 { width: 14px; height: 14px; flex: none; }
.i10 { width: 10px; height: 10px; }
.i28 { width: 28px; height: 28px; }
.tri { display: block; flex: none; width: 0; height: 0; border: 2px solid transparent; border-top: 3px solid #333; border-bottom: 0; }
.tri.wide { border-width: 4px 4px 0; }
.tri.east { border: 4px solid transparent; border-left-color: #222; border-right: 0; }
.tri.west { border: 3px solid transparent; border-right-color: #222; border-left: 0; }
.tri.north { border: 3px solid transparent; border-bottom-color: #222; border-top: 0; }

.window { position: relative; height: 100%; display: flex; flex-direction: column; background: #e2e2e2; }
.titlebar { box-sizing: border-box; height: 24px; flex: none; display: flex; align-items: center; border-top: 1px solid #777; border-bottom: 1px solid #777; background: linear-gradient(#ececec, #b9b9b9); }
.doc { flex: 1; margin: 0 0 0 223px; display: flex; gap: 17px; font-size: 11px; font-weight: 400; white-space: pre; color: #444; }
.right { display: flex; align-items: center; flex: none; }
.search { box-sizing: border-box; width: 156px; height: 19px; margin: 0 1px 0 4px; padding: 0 3px; border: 1px solid #333; background: #fff; font: italic 11px "Noto Sans", "Noto Sans CJK SC", sans-serif; }
.search::placeholder { color: #777; opacity: 1; }
.tb { width: 20px; display: flex; justify-content: center; }
.login { display: flex; align-items: center; gap: 3px; margin: 0 51px 0 4px; color: #222; }
.ex { width: 31px; border-right: 1px solid #aaa; }
.hp { width: 28px; }
.caption { display: flex; gap: 4px; margin: 0 4px 0 20px; }
.appbtn { position: absolute; left: 0; top: 3px; width: 36px; height: 36px; box-sizing: border-box; border: 1px solid #444; background: linear-gradient(#d2d2d2, #8a8a8a); display: flex; align-items: center; padding: 0 2px 4px 4px; gap: 2px; }

.tabs { flex: none; height: 18px; padding-left: 39px; display: flex; align-items: flex-end; background: #9c9c9c; }
.tabs button { height: 17px; padding: 0 8px; line-height: 18px; white-space: nowrap; color: #222; }
.tabs .active { background: linear-gradient(#f6f6f6, #e2e2e2); border-radius: 2px 2px 0 0; }
.tabs .mini { display: flex; align-items: center; gap: 3px; margin-left: 8px; }

.ribbon { flex: none; display: flex; padding: 0 0 1px 1px; background: linear-gradient(90deg, #e9e9e9 0, #e9e9e9 1055px, #999 1055px); border-bottom: 1px solid #777; }
.panel { flex: none; box-sizing: border-box; background: #fbfbfb; border-right: 2px solid #d5d5d5; }
.panel .body { box-sizing: border-box; display: grid; height: 64px; padding: 2px 0 1px; }
.panel footer { position: relative; height: 15px; display: flex; align-items: center; justify-content: center; gap: 5px; background: #ebebeb; border-top: 1px solid #e0e0e0; }
.select { width: 44px; }
.select .body { grid-template-columns: 33px; padding-left: 5px; }
.graphics { width: 302px; }
.graphics .body { grid-template-columns: 38px 86px 86px 1fr; }
.create { width: 360px; }
.create .body { grid-template-columns: 41px 31px 62px 38px 39px 80px 1fr; }
.windows { width: 155px; }
.windows .body { grid-template-columns: 42px 41px 29px 1fr; }
.sheets { width: 194px; border-right: 0; }
.sheets .body { grid-template-columns: 50px 72px 1fr; padding-left: 2px; }
.launcher { position: absolute; right: 2px; top: 5px; }

.big { position: relative; box-sizing: border-box; display: flex; flex-direction: column; align-items: center; justify-content: flex-start; text-align: center; white-space: nowrap; line-height: 14px; padding-top: 2px; }
.big svg { margin-bottom: 2px; }
.create .big, .windows .big, .graphics .big { margin: 0 -4px; }
.big:disabled, .cmd:disabled { color: #b0b0b0; }
.big:disabled .tri, .cmd:disabled .tri { border-top-color: #999; }
.modify, .pressed { border: 1px solid #2a6fba; background: linear-gradient(#cfe3f8, #a9cdf2); }
.modify { padding-top: 3px; }
.modify svg { height: 24px; margin-bottom: 5px; }
.tri.side { position: absolute; right: 4px; bottom: 14px; }
.tri.under { margin-top: 3px; }
.col { display: grid; grid-template-rows: repeat(3, 1fr); min-width: 0; }
.ruled { border-right: 1px solid #dcdcdc; }
.inset { padding-left: 6px; }
.cmd { box-sizing: border-box; justify-self: start; display: flex; align-items: center; gap: 2px; padding: 0 2px; border: 1px solid transparent; white-space: pre; }
.cmd .tri { margin-left: 3px; }
.cmd.on { border-color: #2a6fba; background: #c3dcf6; }
.mid .cmd { justify-self: center; }
.holder { position: relative; display: grid; margin-left: 4px; }
.windows .holder .big { width: 36px; margin: 0; padding-top: 1px; }
.holder .tri.side { right: 1px; }

.menu { position: absolute; z-index: 5; left: 0; top: 62px; width: 112px; box-sizing: border-box; padding: 0 1px 1px; background: #fff; border: 1px solid #555; color: #222; }
.menu label { display: flex; align-items: center; gap: 3px; height: 20px; padding-left: 4px; white-space: nowrap; }
.menu label.off { color: #b0b0b0; }
.menu input { appearance: none; flex: none; width: 12px; height: 12px; margin: 0 0 2px; border: 1px solid #a0a0a0; background: linear-gradient(#eee, #fff); box-sizing: border-box; }
.menu input:checked::after { content: ""; display: block; width: 3px; height: 6px; margin: 0 0 0 3px; border: solid #222; border-width: 0 2px 2px 0; transform: rotate(40deg); }
.menu input:disabled::after { border-color: #999; }
.menu hr { margin: 0 1px 2px; border: 0; border-top: 1px solid #999; }
.menu button { width: 100%; box-sizing: border-box; height: 21px; display: flex; align-items: center; gap: 1px; padding-left: 2px; border: 1px solid transparent; }
.menu .hot { border-color: #2a7fc8; background: linear-gradient(#d9effb, #bfe2f6); }
.menu button svg { width: 15px; height: 15px; }
.tip { position: absolute; left: 105px; top: 225px; width: 150px; padding: 5px; border: 1px solid #888; background: #efefef; color: #444; white-space: nowrap; box-sizing: border-box; font-size: 10px; }
.tip h2 { margin: 0; font-size: 10px; line-height: 14px; font-weight: 700; }
.tip p { margin: 6px 0 0; line-height: 15px; }
.tip .gap { margin-top: 15px; }
.tip .f1 { margin: 9px -5px 0; padding: 5px 5px 0; border-top: 1px solid #aaa; }

.qat { flex: none; box-sizing: border-box; height: 21px; display: flex; align-items: center; padding-left: 4px; background: linear-gradient(#dedede, #bdbdbd); border-bottom: 1px solid #999; }
.qat button { width: 21px; height: 20px; box-sizing: border-box; display: grid; place-items: center; }
.qat svg { width: 15px; height: 15px; }
.qat b { font: 700 16px/18px "Liberation Sans", sans-serif; }
.qat .on { border: 1px solid #2a6fba; background: #b9d7f5; }
.qat .drop { width: 10px; display: grid; place-items: center; }
.qat .sep { width: 5px; }
.qat .more { width: 14px; }
.qat .more svg { width: 8px; height: 8px; }
.optbar { flex: none; height: 21px; }

.work { flex: 1; min-height: 0; display: flex; gap: 5px; padding-bottom: 1px; }
.browser { flex: none; width: 216px; display: flex; flex-direction: column; }
.browser header { flex: none; height: 16px; display: flex; align-items: center; justify-content: space-between; padding: 0 4px; background: #bfccda; color: #4a5566; }
.browser header button { width: 9px; height: 9px; }
.treebox { flex: 1; min-height: 0; margin-top: 2px; border: 1px solid #888; border-width: 1px 0 1px 1px; background: #fff; overflow: hidden; }
.treebox ul { list-style: none; margin: 0; padding: 0 0 0 1px; height: 362px; display: grid; grid-auto-rows: 1fr; color: #111; background: linear-gradient(#bbb, #bbb) no-repeat 7px 9px / 1px 344px; }
.treebox li { display: flex; align-items: center; white-space: nowrap; }
.elbow { position: relative; align-self: stretch; flex: none; width: 12px; margin-right: 4px; display: flex; align-items: center; }
.elbow::after { content: ""; flex: 1; order: 2; border-top: 1px dotted #aaa; }
.d0 .elbow { margin: 0 0 0 3px; width: 14px; }
.d1 .elbow { margin-left: 20px; width: 14px; }
.d2 .elbow { margin-left: 37px; width: 15px; }
.d3 .elbow { margin-left: 58px; width: 13px; margin-right: 0; }
.d2 .elbow::before, .d3 .elbow::before { content: ""; position: absolute; left: 4px; top: 0; bottom: 0; border-left: 1px dotted #aaa; }
.d3 .elbow::before { left: 0; }
.elbow.end::before { bottom: 50%; }
.box { position: relative; z-index: 1; width: 9px; height: 9px; border: 1px solid #999; background: linear-gradient(#2a4a8c, #2a4a8c) no-repeat center / 5px 1px, #f6f6f6; box-sizing: border-box; }
.box.plus { background: linear-gradient(#2a4a8c, #2a4a8c) no-repeat center / 5px 1px, linear-gradient(#2a4a8c, #2a4a8c) no-repeat center / 1px 5px, #f6f6f6; }
.d0 .name { margin-left: 5px; }
.d3 .name { padding: 0 3px; line-height: 16px; }
.name.sel { background: #e0e0e0; }

.view { flex: 1; min-width: 0; display: grid; grid-template: 1fr 17px / 1fr 15px; border: solid #666; border-width: 1px 0 0 1px; background: #f0f0f0; }
.canvas { position: relative; overflow: hidden; background: #fff; min-width: 0; min-height: 0; }
.drawing { display: block; }
.lv { font: 17px "Liberation Sans", sans-serif; fill: #111; }
.ln { font: 14px "Liberation Sans", "Noto Sans CJK SC", sans-serif; fill: #111; }
.wm { font: italic 700 39px "Liberation Serif", serif; fill: #b9dbea; }
.wmc { font: 700 15px "Liberation Sans", sans-serif; fill: #b9dbea; }
.docbtns { position: absolute; right: 4px; top: 7px; display: flex; gap: 3px; }
.navbar { position: absolute; right: 2px; top: 24px; width: 30px; height: 101px; box-sizing: border-box; border: 1px solid #aaa; border-radius: 5px; background: #f4f4f4; display: flex; flex-direction: column; align-items: center; }
.navbar hr { width: 22px; margin: 4px 0 6px; border: 0; border-top: 1px solid #bbb; }
.navbar .tri { margin-top: 4px; border-top-color: #777; }
.dot { align-self: flex-end; width: 4px; height: 4px; margin: 2px 3px 8px 0; border: 1px solid #999; border-radius: 50%; }
.dot.low { margin: auto 3px 2px 0; }
.wheelbtn { position: relative; }
.wheelbtn b { position: absolute; right: 0; bottom: 0; font-size: 8px; line-height: 9px; color: #6c8fc0; }
.vscroll { display: flex; flex-direction: column; justify-content: space-between; align-items: center; padding: 6px 0; }
.viewbar { display: flex; align-items: center; }
.scale { width: 51px; margin-left: 16px; color: #222; }
.viewbar button { width: 18px; display: grid; place-items: center; }
.viewbar .west { margin-left: 6px; }
.track { flex: 1; display: grid; place-items: center; height: 17px; }
.thumb { width: 11px; height: 11px; border: 1px solid #999; border-radius: 2px; background: linear-gradient(#fafafa, #d0d0d0); }
.viewbar > .east { margin-right: 5px; }
.grip { width: 9px; height: 9px; align-self: end; background: radial-gradient(circle, #aaa 1px, transparent 1px) 0 0 / 3px 3px; clip-path: polygon(100% 0, 100% 100%, 0 100%); }

.status { flex: none; box-sizing: border-box; height: 23px; display: flex; align-items: center; border-top: 1px solid #888; border-bottom: 1px solid #777; background: linear-gradient(#e9e9e9, #c2c2c2); color: #222; }
.status p { flex: none; width: 418px; box-sizing: border-box; padding-left: 1px; margin: 0; font-size: 10px; white-space: nowrap; overflow: hidden; }
.cell { height: 19px; min-width: 22px; display: flex; align-items: center; justify-content: center; gap: 2px; background: #e0e0e0; }
.req { width: 36px; margin: 0 10px 0 2px; }
.combo { position: relative; display: flex; width: 136px; margin-left: 3px; }
.combo.ws { width: 178px; margin-left: 4px; }
.combo select { appearance: none; width: 100%; height: 19px; padding: 0 3px; border: 1px solid #d5d5d5; border-radius: 0; background: #fff; font: inherit; color: #777; }
.combo .tri { position: absolute; right: 4px; top: 8px; border-width: 4px 3px 0; border-top-color: #999; }
.fill { flex: 1; }
.pick { min-width: 20px; margin-right: 2px; }
</style>
